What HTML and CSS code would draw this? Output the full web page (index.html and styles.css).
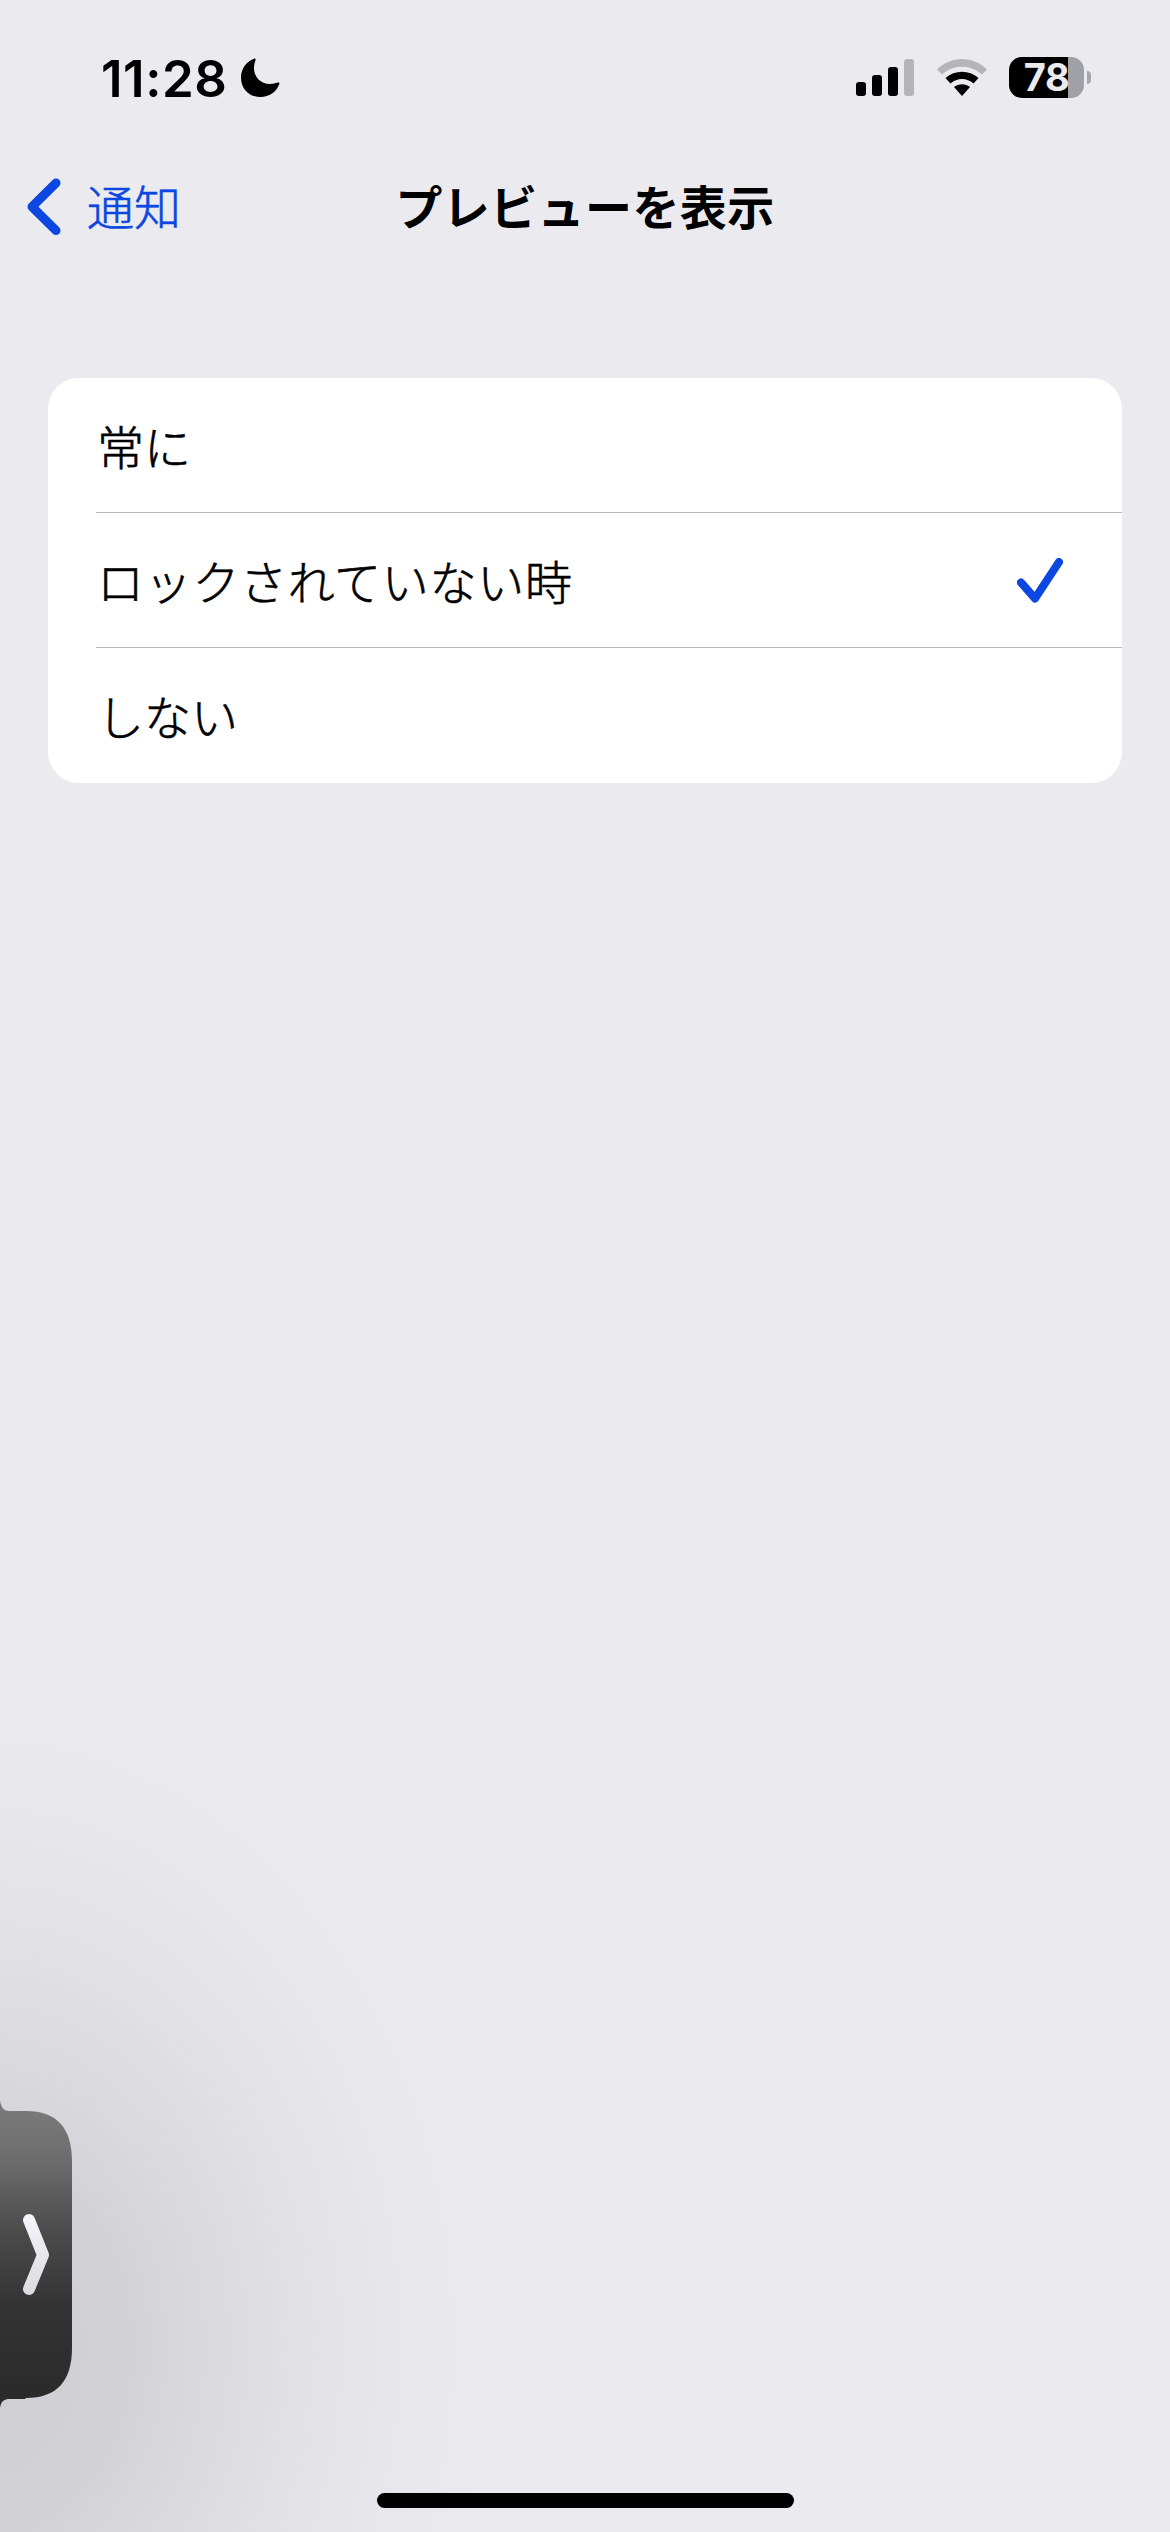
FILE: index.html
```html
<!DOCTYPE html>
<html lang="ja">
<head>
<meta charset="utf-8">
<title>プレビューを表示</title>
<link rel="stylesheet" href="styles.css">
</head>
<body>
<div class="screen">
  <header class="status">
    <div class="clock">
      <span class="time">11:28</span>
      <svg class="moon" width="40" height="40" viewBox="0 0 40 40"><path d="M14 .8C15 .2 16 1 15.500 2.200C14.500 5 14 7 14 10C14 19 20.500 26 30 26C33 26 35.500 25.500 37.800 24.600C39 24.200 39.700 25 39.300 26C36.500 34 29 39 20.500 39C9 39 1 31 1 19.500C1 11 6 4 14 .8Z"/></svg>
    </div>
    <div class="indicators">
      <svg class="signal" width="58" height="37" viewBox="0 0 58 37"><rect y="23" width="10" height="14" rx="3"/><rect x="16" y="16" width="10" height="21" rx="3"/><rect x="32" y="8" width="10" height="29" rx="3"/><rect class="dim" x="48" width="10" height="37" rx="3"/></svg>
      <svg class="wifi" width="50" height="37" viewBox="0 0 50 37"><path class="dim" d="M0 10.500C14-3.500 36-3.500 50 10.500L45 15.500C34 5 16 5 5 15.500Z"/><path d="M8.500 19C18 10.500 32 10.500 41.500 19L36.500 24.500C30 18.500 20 18.500 13.500 24.500Z"/><path d="M17 28C22 24.300 28 24.300 33 28L25 37Z"/></svg>
      <div class="battery"><span class="level">78</span><i class="cap"></i></div>
    </div>
  </header>
  <nav class="nav">
    <a class="back">
      <svg width="34" height="58" viewBox="0 0 34 58"><path d="M29 5L5 28.700L29 52.500"/></svg>
      <span class="label">通知</span>
    </a>
    <h1 class="title">プレビューを表示</h1>
  </nav>
  <ul class="options">
    <li class="option"><span>常に</span></li>
    <li class="option"><span class="long">ロックされていない時</span>
      <svg class="check" width="46" height="46" viewBox="0 0 46 46"><path d="M4 24.500L18 40.500L42 4"/></svg>
    </li>
    <li class="option"><span>しない</span></li>
  </ul>
  <svg class="handle" width="73" height="310" viewBox="0 0 73 310">
    <defs>
      <linearGradient id="body" x2="0" y2="1"><stop offset="0" stop-color="#7c7c7c"/><stop offset=".2" stop-color="#6c6c6c"/><stop offset=".43" stop-color="#4b4b4b"/><stop offset=".66" stop-color="#343434"/><stop offset="1" stop-color="#292929"/></linearGradient>
      <linearGradient id="arrow" gradientUnits="userSpaceOnUse" x1="0" y1="115" x2="0" y2="195"><stop stop-color="#f5f5f9"/><stop offset="1" stop-color="#dcdce0"/></linearGradient>
    </defs>
    <path fill="url(#body)" d="M0 0C1 8 4 11 10 11H26C57 11 72 28 72 61V248C72 281 57 298 26 298L25 299H10C4 299 1 301 0 308Z"/>
    <path class="arrow" d="M29 120L43 155L29 189"/>
  </svg>
  <div class="home"></div>
</div>
</body>
</html>
```
FILE: styles.css
```css
* { box-sizing: border-box; }
body { margin: 0; }
.screen {
  position: relative;
  width: 1170px;
  height: 2532px;
  overflow: hidden;
  color: #000;
  font-family: Inter, "Noto Sans CJK JP", sans-serif;
  background: radial-gradient(ellipse 540px 690px at -20px 2345px, #cfced3 0%, #d2d1d6 26%, #d9d8dd 40%, #e1e1e5 58%, #e6e6ea 72%, #e9e9ed 86%, #ebebef 100%) #ebebef;
}
.status {
  display: flex;
  justify-content: space-between;
  height: 156px;
  padding: 57px 78px 0 101px;
}
.clock { display: flex; align-items: flex-start; gap: 14px; height: 42px; }
.time { font-size: 51px; font-weight: 600; line-height: 43px; width: 125px; letter-spacing: 0.5px; white-space: nowrap; }
.moon { margin-top: 1px; }
.indicators { display: flex; align-items: flex-start; }
.signal { margin: 2px 23px 0 0; }
.wifi { margin: 2px 22px 0 0; }
.dim { fill: #b5b5b9; }
.battery { display: flex; align-items: center; gap: 3px; width: 83px; height: 41px; }
.level {
  width: 75px;
  height: 41px;
  border-radius: 13px;
  color: #ebebef;
  background: linear-gradient(90deg, #000 59px, #a0a0a7 59px);
  font-size: 38px;
  font-weight: 700;
  line-height: 41px;
  letter-spacing: -0.5px;
  text-align: center;
}
.cap { width: 4px; height: 13px; border-radius: 0 4px 4px 0; background: #a6a6ac; }
.nav {
  display: grid;
  grid-template-columns: 1fr auto 1fr;
  align-items: center;
  height: 102px;
  padding: 0 27px;
  font-family: "Noto Sans CJK JP", sans-serif;
}
.back { display: flex; align-items: center; gap: 26px; color: #0b47e0; font-size: 47px; font-weight: 300; line-height: 60px; -webkit-text-stroke: 0.6px; }
.label { padding-bottom: 4px; }
.back path, .check path { fill: none; stroke: #0b47e0; stroke-linecap: round; stroke-linejoin: round; }
.back path { stroke-width: 9; }
.title { margin: 0; padding-bottom: 5px; font-size: 47px; font-weight: 700; line-height: 60px; letter-spacing: 0.4px; white-space: nowrap; }
.options {
  margin: 120px 48px 0;
  padding: 0;
  list-style: none;
  border-radius: 31px;
  background: #fff;
}
.option {
  display: flex;
  align-items: center;
  justify-content: space-between;
  height: 135px;
  margin-left: 48px;
  padding: 0 59px 1px 1px;
  font: 300 47px/60px "Noto Sans CJK JP", sans-serif;
  -webkit-text-stroke: 0.6px;
}
.option:not(:last-child) { border-bottom: 1px solid #b8b8bc; }
.long { letter-spacing: 0.7px; }
.check { margin-top: 2px; }
.check path { stroke-width: 8; }
.handle { position: absolute; left: 0; top: 2100px; }
.arrow { fill: none; stroke: url(#arrow); stroke-width: 12; stroke-linecap: round; stroke-linejoin: round; }
.home { position: absolute; left: 377px; top: 2493px; width: 417px; height: 15px; border-radius: 8px; background: #000; }
```
